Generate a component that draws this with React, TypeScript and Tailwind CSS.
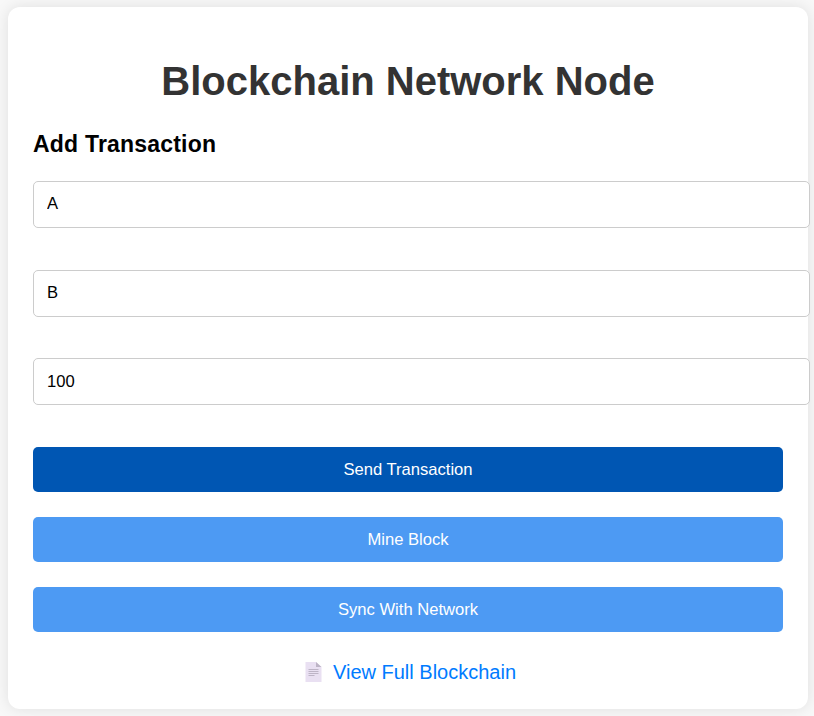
import React from "react";

const inputClass =
  "block h-[47px] w-[777px] rounded-[5px] border border-[#cccccc] bg-white pl-[13px] text-[16.6px] text-black outline-none";
const buttonClass =
  "block h-[45px] w-full rounded-[5px] pt-[2px] text-[16.6px] text-white";

export default function App() {
  return (
    <div className="h-[716px] w-[814px] overflow-hidden bg-[#f8f8f8] pl-2 pt-[7px] font-['Liberation_Sans',Arial,sans-serif]">
      <main className="h-[702px] w-[800px] rounded-[12px] bg-white px-[25px] pt-[50px] shadow-[0_0_15px_rgba(0,0,0,0.1)]">
        <h1 className="text-center text-[40px] font-bold leading-[48px] text-[#333333]">Blockchain Network Node</h1>
        <h2 className="mt-[25px] text-[23px] font-bold leading-[28px] tracking-[0.2px] text-black">Add Transaction</h2>
        <div className="mt-[23px] flex flex-col">
          <input className={inputClass + " pb-px"} defaultValue="A" />
          <input className={inputClass + " mt-[42px] pb-px"} defaultValue="B" />
          <input className={inputClass + " mt-[41px]"} defaultValue="100" />
        </div>
        <div className="mt-[42px] flex flex-col gap-[25px]">
          <button className={buttonClass + " bg-[#0056b3]"}>Send Transaction</button>
          <button className={buttonClass + " bg-[#4d9af3]"}>Mine Block</button>
          <button className={buttonClass + " bg-[#4d9af3]"}>Sync With Network</button>
        </div>
        <a className="mt-[28px] flex items-center justify-center gap-[11px] pl-[5px] text-[20px] leading-[24px] text-[#007bff]">
          <svg width="17" height="20" viewBox="0 0 17 20">
            <path d="M.5 0H11l5.500 5v15H.5z" fill="#e9e0f2" />
            <path d="M11 0v5h5.500z" fill="#bdb4c6" />
            <path d="M3.500 7.500h10M3.500 9.500h10M3.500 11.500h10M3.500 13.500h6" stroke="#bdb4c6" />
          </svg>
          <span>View Full Blockchain</span>
        </a>
      </main>
    </div>
  );
}
